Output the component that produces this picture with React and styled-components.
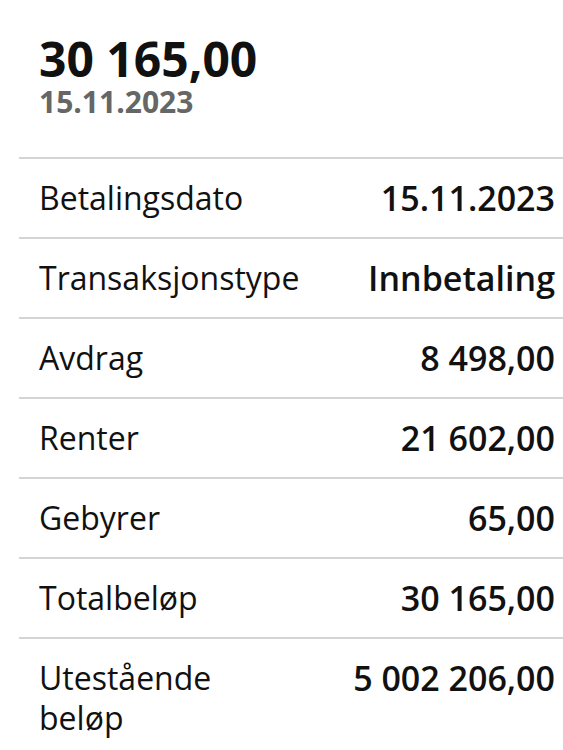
import React from 'react';
import styled, { createGlobalStyle } from 'styled-components';

const rows = [
  { label: 'Betalingsdato', value: '15.11.2023' },
  { label: 'Transaksjonstype', value: 'Innbetaling' },
  { label: 'Avdrag', value: '8 498,00' },
  { label: 'Renter', value: '21 602,00' },
  { label: 'Gebyrer', value: '65,00' },
  { label: 'Totalbeløp', value: '30 165,00' },
  { label: 'Utestående beløp', value: '5 002 206,00' },
];

const App = () => (
  <>
    <GlobalStyle />
    <Page>
      <Header>
        <Amount>30 165,00</Amount>
        <DateText>15.11.2023</DateText>
      </Header>
      <List>
        {rows.map((row) => (
          <Row key={row.label}>
            <Label>{row.label}</Label>
            <Value>{row.value}</Value>
          </Row>
        ))}
      </List>
    </Page>
  </>
);

export default App;

const GlobalStyle = createGlobalStyle`
  body {
    margin: 0;
    background: #fff;
    font-family: "Open Sans", "Noto Sans", sans-serif;
    color: #111;
  }
`;

const Page = styled.div`
  width: 563px;
  height: 750px;
  overflow: hidden;
`;

const Header = styled.div`
  padding: 33px 20px 38px 39px;
`;

const Amount = styled.div`
  font-size: 48px;
  font-weight: 700;
  line-height: 52px;
  color: #111;
`;

const DateText = styled.div`
  font-size: 30px;
  font-weight: 700;
  line-height: 34px;
  color: #666;
`;

const List = styled.div`
  margin-left: 19px;
  border-top: 2px solid #d4d4d4;
`;

const Row = styled.div`
  display: flex;
  justify-content: space-between;
  align-items: flex-start;
  gap: 24px;
  padding: 19px 8px 19px 20px;
  border-bottom: 2px solid #d4d4d4;
  font-size: 32px;
  line-height: 40px;
`;

const Label = styled.div`
  font-weight: 400;
  max-width: 220px;
`;

const Value = styled.div`
  font-size: 34px;
  font-weight: 600;
  text-align: right;
  white-space: nowrap;
`;
